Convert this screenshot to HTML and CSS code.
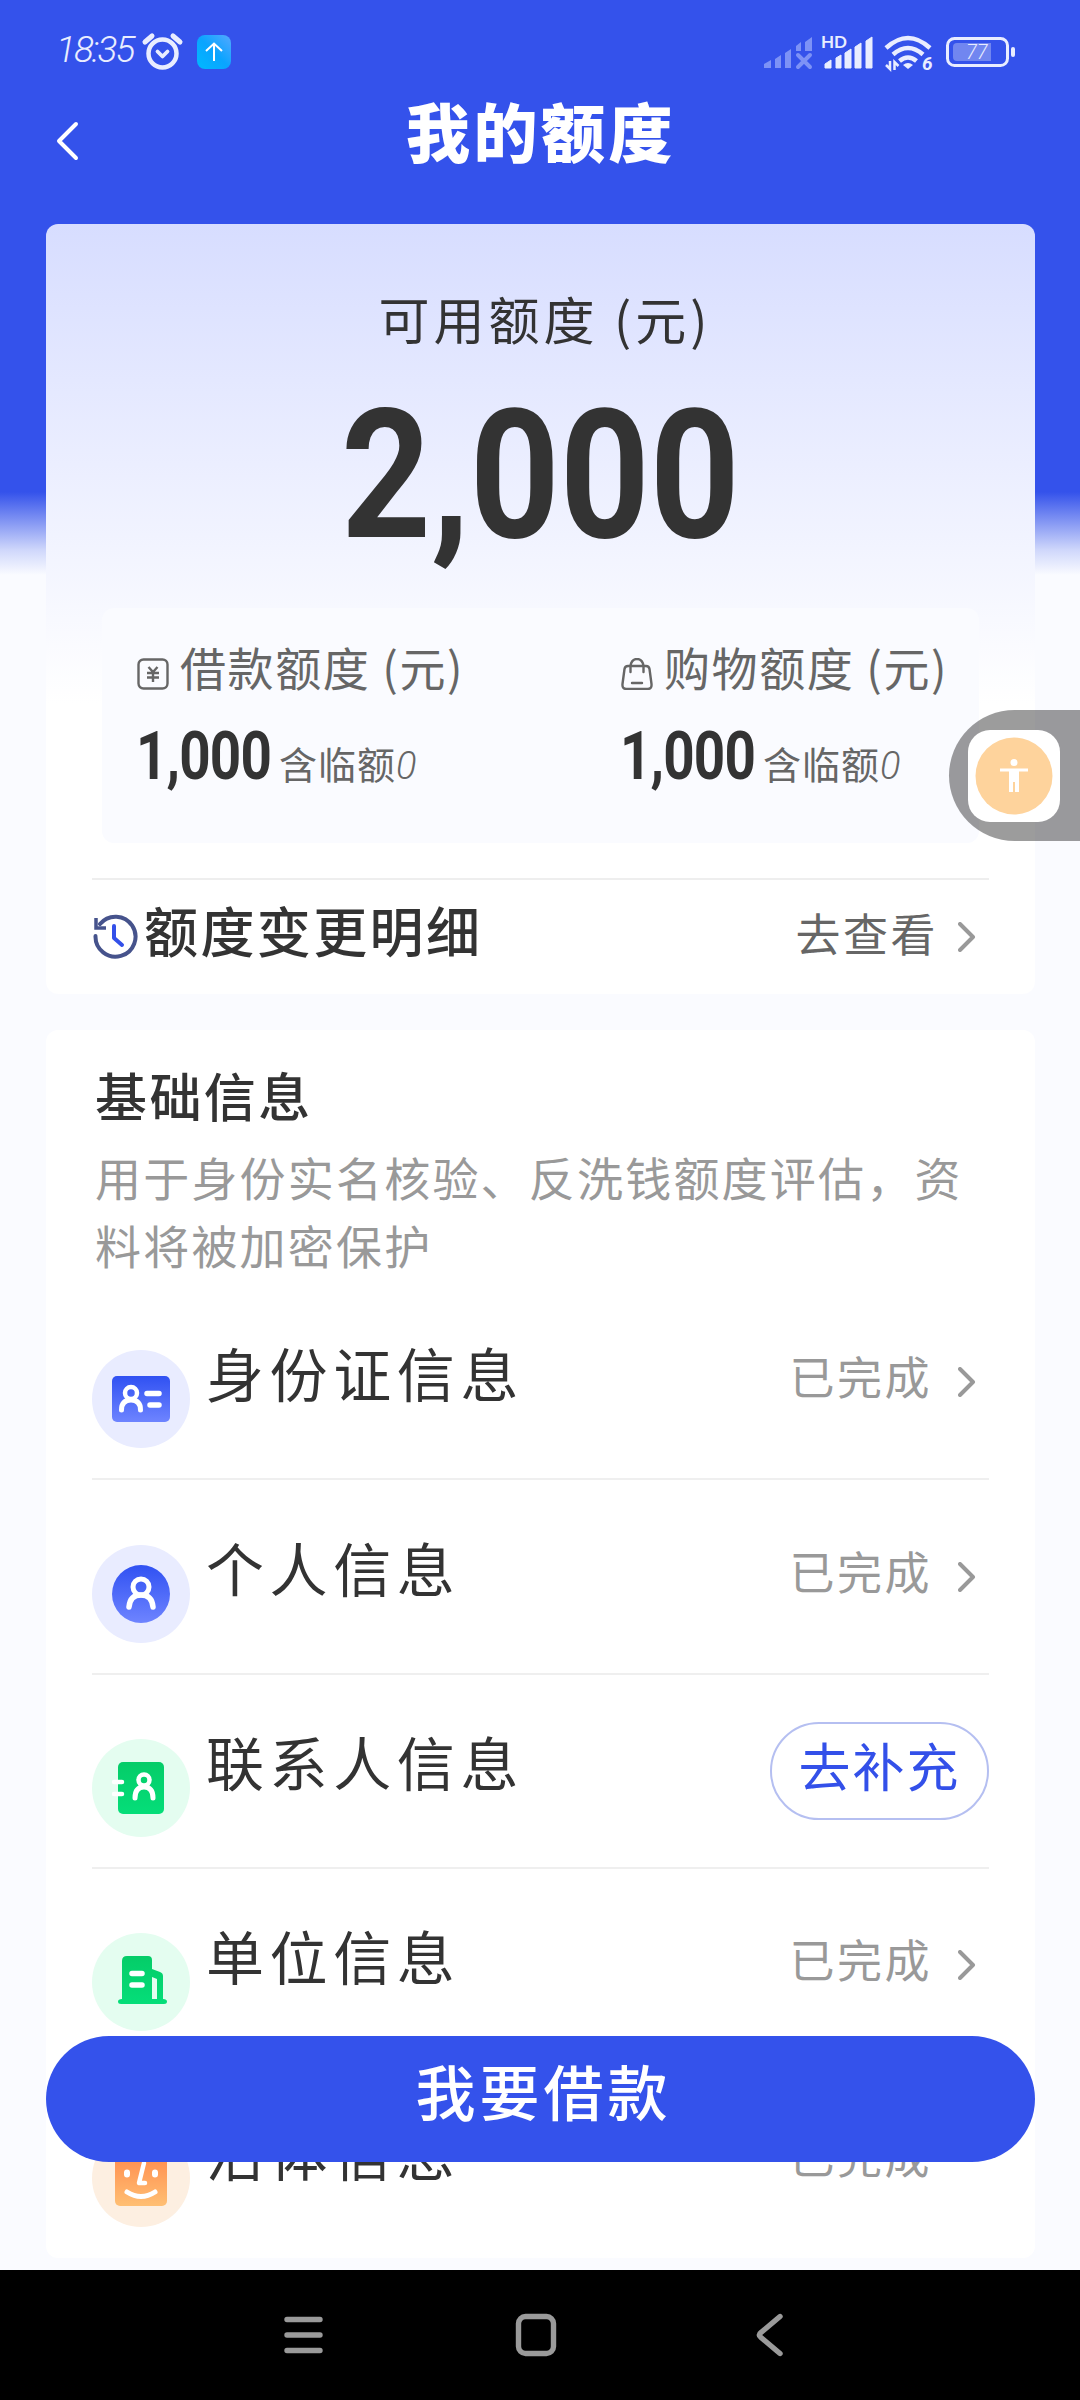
FILE: index.html
```html
<!DOCTYPE html>
<html lang="zh-CN">
<head>
<meta charset="utf-8">
<title>我的额度</title>
<link rel="stylesheet" href="styles.css">
</head>
<body>
<div class="screen">
  <header class="status-bar">
    <span class="clock">18:35</span>
    <svg class="status-left" viewBox="140 30 96 44" fill="none" stroke="#e9edff">
      <circle cx="162.500" cy="53.500" r="14" stroke-width="4.500"/>
      <path d="M145 42l7-6M180 42l-7-6" stroke-width="5" stroke-linecap="round"/>
      <path d="M157.500 51.500l5 5 5-5" stroke-width="3.800" stroke-linecap="round" stroke-linejoin="round"/>
      <defs><linearGradient id="app" x1="0" y1="1" x2="1" y2="0"><stop offset="0" stop-color="#00b9ff"/><stop offset=".5" stop-color="#0aa4ff"/><stop offset="1" stop-color="#55a8ff"/></linearGradient></defs>
      <rect x="197" y="35" width="34" height="34" rx="8" fill="url(#app)" stroke="none"/>
      <path d="M214 61V43.500M206 51l8-7.500 8 7.500" stroke="#fff" stroke-width="2"/>
    </svg>
    <svg class="status-right" viewBox="760 30 260 44" fill="#e9edff">
      <g fill="#7d92f6">
        <path d="M764 68v-4l7-4v8zM775 68v-9l6-4v13zM785 68V53l6-4v19zM796 51v-5l5-4v9zM805 51V42l7-5v14z"/>
        <path d="M798 55l12 12M810 55l-12 12" stroke="#7d92f6" stroke-width="4" stroke-linecap="round"/>
      </g>
      <path d="M825 68v-4l6-4v8zM836 68V58l5-3v13zM845 68V53l6-4v19zM855 68V47l6-4v25zM866 68V41l6-4v31z" stroke="#e9edff" stroke-linejoin="round"/>
      <text x="821" y="48" class="hd">HD</text>
      <g fill="none" stroke="#e9edff" stroke-width="4.500">
        <path d="M886 48q22-20 44 0M893 54.500q15-13 30 0M899.500 61q8.500-7 17 0"/>
      </g>
      <path d="M908 69l-5-4q5-4 10 0z"/>
      <path d="M886 65l4 4V61M894.500 70V62l4 4" fill="none" stroke="#e9edff" stroke-width="2.500"/>
      <text x="922" y="70" class="wifi-gen">6</text>
      <rect x="947.500" y="38.500" width="60" height="27" rx="7" fill="none" stroke="#e9edff" stroke-width="3"/>
      <path d="M957 43h34v18h-34a4 4 0 0 1-4-4V47a4 4 0 0 1 4-4z" fill="#7186f0"/>
      <rect x="1011" y="47" width="4" height="10" rx="2"/>
      <text x="966" y="58.500" class="battery">77</text>
    </svg>
  </header>

  <div class="title-bar">
    <svg class="back" viewBox="0 0 24 42" fill="none" stroke="#fff" stroke-width="4" stroke-linecap="round" stroke-linejoin="round"><path d="M20 4L3 21l17 17"/></svg>
    <h1>我的额度</h1>
  </div>

  <main>
    <section class="card quota">
      <div class="quota-label">可用额度<span class="yuan"> (元)</span></div>
      <div class="quota-total">2,000</div>
      <div class="split">
        <div>
          <div class="split-label">
            <svg viewBox="0 0 32 32" fill="none" stroke="#666" stroke-width="2.400"><rect x="1.500" y="1.500" width="29" height="29" rx="5"/><path d="M11.500 9l4.500 5 4.500-5M10 15h12M10 19.500h12M16 14v10"/></svg>
            <span>借款额度 <span class="yuan">(元)</span></span>
          </div>
          <div class="split-value"><b>1,000</b><span>含临额<i>0</i></span></div>
        </div>
        <div>
          <div class="split-label">
            <svg viewBox="0 0 32 32" fill="none" stroke="#666" stroke-width="2.400" stroke-linecap="round"><path d="M7 8h18q3 0 3.500 3l2 15q.5 5-4 5h-21q-4.500 0-4-5l2-15q.5-3 3.500-3z"/><path d="M9.500 14V8q1-7 6.500-7t6.500 7v6M11 25h10"/></svg>
            <span>购物额度 <span class="yuan">(元)</span></span>
          </div>
          <div class="split-value"><b>1,000</b><span>含临额<i>0</i></span></div>
        </div>
      </div>
      <div class="history">
        <svg class="clock-icon" viewBox="0 0 46 46" fill="none" stroke="#46538c" stroke-width="4"><path d="M3.500 22A20 20 0 1 0 8 10" stroke-linecap="round"/><path d="M4 4v10h10" stroke-width="3.500"/><path d="M22 12v12l8 7" stroke="#3350e9" stroke-linecap="round" stroke-linejoin="round"/></svg>
        <span class="history-name">额度变更明细</span>
        <span class="state dark">去查看</span>
        <svg class="chev" viewBox="0 0 18 30"><path d="M2 2l13 13L2 28"/></svg>
      </div>
    </section>

    <section class="card info">
      <h2>基础信息</h2>
      <p>用于身份实名核验、反洗钱额度评估，资料将被加密保护</p>
      <ul>
        <li>
          <svg class="ico" viewBox="0 0 98 98" fill="none" stroke="#fff" stroke-linecap="round">
            <defs><linearGradient id="blue" x1="0" y1="0" x2="0" y2="1"><stop offset="0" stop-color="#3051f2"/><stop offset="1" stop-color="#6e84ff"/></linearGradient></defs>
            <circle cx="49" cy="49" r="49" fill="#e9ecff" stroke="none"/>
            <rect x="20" y="26" width="58" height="46" rx="5" fill="url(#blue)" stroke="none"/>
            <circle cx="39" cy="43" r="6" stroke-width="4.500"/>
            <path d="M29.500 60q0-10 9.500-10t9.500 10" stroke-width="5"/>
            <path d="M55 43.500h12M58 55h9" stroke-width="5.500"/>
          </svg>
          <span class="name">身份证信息</span><span class="state">已完成</span>
          <svg class="chev" viewBox="0 0 18 30"><path d="M2 2l13 13L2 28"/></svg>
        </li>
        <li>
          <svg class="ico" viewBox="0 0 98 98" fill="none" stroke="#fff" stroke-linecap="round">
            <circle cx="49" cy="49" r="49" fill="#e9ecff" stroke="none"/>
            <circle cx="49" cy="49" r="29" fill="url(#blue)" stroke="none"/>
            <circle cx="49" cy="42" r="8" stroke-width="5"/>
            <path d="M37 62q1-12 12-12t12 12" stroke-width="5.500"/>
          </svg>
          <span class="name">个人信息</span><span class="state">已完成</span>
          <svg class="chev" viewBox="0 0 18 30"><path d="M2 2l13 13L2 28"/></svg>
        </li>
        <li>
          <svg class="ico" viewBox="0 0 98 98" fill="none" stroke="#fff" stroke-linecap="round">
            <defs><linearGradient id="green" x1="0" y1="0" x2="0" y2="1"><stop offset="0" stop-color="#05cc68"/><stop offset="1" stop-color="#05de79"/></linearGradient></defs>
            <circle cx="49" cy="49" r="49" fill="#e4fdf0" stroke="none"/>
            <rect x="26" y="23" width="46" height="52" rx="5" fill="url(#green)" stroke="none"/>
            <path d="M22 43h8M22 55h8" stroke-width="4.500"/>
            <circle cx="52" cy="41" r="5.500" stroke-width="4.500"/>
            <path d="M43 59q0-11 9-11t9 11" stroke-width="5"/>
          </svg>
          <span class="name">联系人信息</span><span class="pill">去补充</span>
        </li>
        <li>
          <svg class="ico" viewBox="0 0 98 98" fill="none" stroke="#fff" stroke-linecap="round">
            <circle cx="49" cy="49" r="49" fill="#e4fdf0" stroke="none"/>
            <path d="M35 23h21q4 0 4 4v9l8 3q3 1 3 4v23q4 0 4 2.500T72 71H29q-3 0-3-2.500t4-2.500V28q0-5 5-5z" fill="url(#green)" stroke="none"/>
            <path d="M40 40.500h10M40 52h10" stroke-width="5.500"/>
            <path d="M60 44l5 2v20h-5z" fill="#e4fdf0" stroke="none"/>
          </svg>
          <span class="name">单位信息</span><span class="state">已完成</span>
          <svg class="chev" viewBox="0 0 18 30"><path d="M2 2l13 13L2 28"/></svg>
        </li>
        <li>
          <svg class="ico" viewBox="0 0 98 98" fill="none" stroke="#fff" stroke-linecap="round">
            <defs><linearGradient id="orange" x1="0" y1="0" x2="0" y2="1"><stop offset="0" stop-color="#ff8a4c"/><stop offset="1" stop-color="#ffbf73"/></linearGradient></defs>
            <circle cx="49" cy="49" r="49" fill="#fdefe1" stroke="none"/>
            <rect x="23" y="23" width="52" height="54" rx="5" fill="url(#orange)" stroke="none"/>
            <path d="M35 43.500v2M63 43.500v2" stroke-width="6"/>
            <path d="M52 34l-5 20h6" stroke-width="4.500" stroke-linejoin="round"/>
            <path d="M35 63q14 9 28 0" stroke-width="5"/>
          </svg>
          <span class="name">活体信息</span><span class="state last">已完成</span>
        </li>
      </ul>
    </section>
  </main>

  <nav class="nav-bar">
    <svg viewBox="0 0 44 44"><path d="M6 6.500h33M6 22h33M6 37.500h33"/></svg>
    <svg viewBox="0 0 44 44"><rect x="4.500" y="3.500" width="35" height="37" rx="7"/></svg>
    <svg viewBox="0 0 44 44"><path d="M33 3.500L14 19.500q-3.500 2.500 0 5L33 40.500"/></svg>
  </nav>

  <button class="borrow">我要借款</button>
  <div class="assist">
    <svg viewBox="0 0 92 92"><rect width="92" height="92" rx="22" fill="#fff"/><circle cx="46" cy="46" r="38.500" fill="#fed39c"/><circle cx="46" cy="32.500" r="3.500" fill="#fff"/><path d="M32 38.500h28v3h-9V62h-4V52h-2v10h-4V41.500h-9z" fill="#fff"/></svg>
  </div>
</div>
</body>
</html>
```
FILE: styles.css
```css
* { box-sizing: border-box; }
body { margin: 0; }
h1, h2, p, ul { margin: 0; padding: 0; }
ul { list-style: none; }
svg { display: block; flex: none; }

.screen {
  position: relative;
  display: flex;
  flex-direction: column;
  width: 1080px;
  height: 2400px;
  overflow: hidden;
  color: #333;
  font-family: "Noto Sans CJK SC", sans-serif;
  white-space: nowrap;
  background: #fafbff linear-gradient(#3452eb 0 492px, #cfd7fb 550px, #fafbff 575px) no-repeat 0 0 / 100% 575px;
}

/* status bar */
.status-bar { display: flex; align-items: center; height: 104px; padding: 0 60px 0 56px; }
.clock { width: 84px; font: italic 300 37px/40px Roboto, sans-serif; letter-spacing: -2px; padding-bottom: 4px; color: #e9edff; }
.status-left { width: 96px; height: 44px; }
.status-right { width: 260px; height: 44px; margin-left: auto; }
.hd { font: 700 17px Lato, sans-serif; }
.wifi-gen { font: italic 700 19px Roboto, sans-serif; }
.battery { font: italic 300 20px Roboto, sans-serif; }

/* title bar */
.title-bar { display: flex; align-items: center; height: 120px; padding: 0 56px 46px 56px; }
.title-bar .back { width: 24px; height: 42px; }
.title-bar h1 { flex: 1; margin: -24px 22px 0 0; text-align: center; font-size: 64px; line-height: 80px; font-weight: 900; letter-spacing: 3.500px; color: #fff; }

main { display: flex; flex-direction: column; gap: 36px; height: 2046px; padding: 0 45px 0 46px; }
.card { border-radius: 12px; background: #fff; }

/* quota card */
.quota { height: 770px; padding: 64px 46px 0; background: #fff linear-gradient(#d7ddff, #fff) no-repeat 0 0 / 100% 480px; }
.quota-label { padding-left: 9px; text-align: center; font-size: 51px; line-height: 60px; letter-spacing: 4px; }
.quota-total { margin-top: 38px; text-align: center; font: 700 180px/180px Roboto, sans-serif; transform: scaleX(.872); }
.split { display: grid; grid-template-columns: 484px 1fr; height: 235px; margin: 42px 10px 0; padding: 28px 0 0 35px; border-radius: 12px; background: #fafbff; }
.split-label { display: flex; align-items: center; gap: 11px; font-size: 46px; line-height: 60px; letter-spacing: 1.600px; color: #666; }
.split-label svg { width: 32px; height: 32px; margin-top: 16px; }
.split-value { display: flex; margin-top: 28px; line-height: 66px; color: #666; }
.split-value b { width: 143px; margin-left: -1px; font: 700 66px/66px Roboto, sans-serif; letter-spacing: -1px; color: #333; transform: scaleX(.83); transform-origin: 0 50%; }
.split-value span { padding-top: 6px; font-size: 38px; letter-spacing: 1px; }
.split-value i { font-family: Roboto, sans-serif; font-weight: 300; }
.history { display: flex; align-items: center; height: 116px; margin-top: 35px; border-top: 2px solid #eee; }
.clock-icon { width: 46px; height: 46px; }
.history-name { flex: 1; margin: -14px 0 0 6px; font-size: 54px; line-height: 60px; letter-spacing: 2.400px; font-weight: 500; }
.state { margin: -12px 26px 0 0; font-size: 45px; line-height: 60px; letter-spacing: 2.500px; color: #999; }
.state.dark { margin: -8px 20px 0 0; color: #666; }
.chev { width: 18px; height: 30px; margin-right: 13px; fill: none; stroke: #999; stroke-width: 4; stroke-linecap: round; stroke-linejoin: round; }

/* information card */
.info { height: 1228px; padding: 35px 46px 0; }
.info h2 { padding-left: 3px; font-size: 52px; line-height: 60px; letter-spacing: 2.400px; font-weight: 500; }
.info p { margin: 17px 0 8px; padding-left: 3px; white-space: normal; font-size: 46px; line-height: 68px; letter-spacing: 2.200px; color: #999; }
.info li { display: flex; align-items: center; height: 194.400px; border-bottom: 2px solid #efefef; }
.info li:last-child { border: 0; }
.ico { width: 98px; height: 98px; margin-top: 34px; }
.name { flex: 1; margin: -20px 0 0 16px; font-size: 58px; line-height: 80px; letter-spacing: 5.600px; }
.state.last { margin-right: 57px; }
.pill { width: 219px; height: 98px; border: 2px solid #b5bff1; border-radius: 49px; text-align: center; font-size: 52px; line-height: 82px; letter-spacing: 2px; color: #3350e9; }

/* system navigation */
.nav-bar { display: flex; justify-content: center; gap: 189px; align-items: center; height: 130px; padding-right: 8px; background: #000; }
.nav-bar svg { width: 44px; height: 44px; fill: none; stroke: #9a9a9a; stroke-width: 5.400; stroke-linecap: round; stroke-linejoin: round; }

/* floating controls over the page */
.borrow { position: absolute; left: 46px; top: 2036px; width: 989px; height: 126px; padding: 0 0 18px 6px; border: 0; border-radius: 63px; background: #3452eb; color: #fff; font: 500 60px/80px "Noto Sans CJK SC", sans-serif; letter-spacing: 4px; }
.assist { position: absolute; right: 0; top: 710px; width: 131px; height: 131px; padding: 20px 19px; border-radius: 66px 0 0 66px; background: rgba(0, 0, 0, .39); }
.assist svg { width: 92px; height: 92px; }
```
